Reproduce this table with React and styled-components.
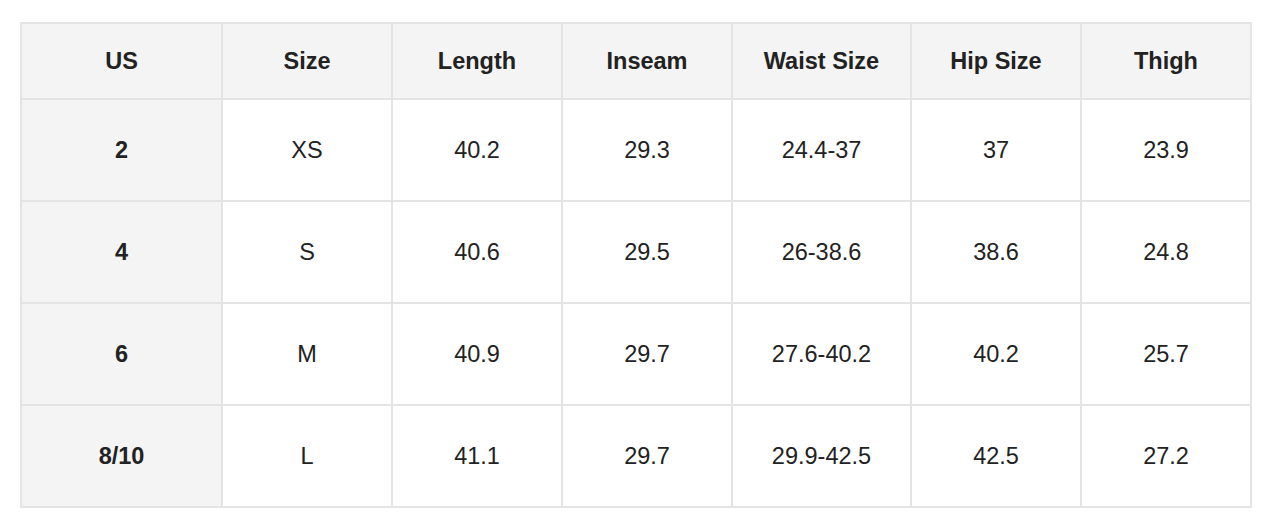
import styled, { createGlobalStyle } from "styled-components";

const columns = [
  { key: "us", label: "US", width: 201 },
  { key: "size", label: "Size", width: 170 },
  { key: "length", label: "Length", width: 170 },
  { key: "inseam", label: "Inseam", width: 170 },
  { key: "waist", label: "Waist Size", width: 179 },
  { key: "hip", label: "Hip Size", width: 170 },
  { key: "thigh", label: "Thigh", width: 170 },
];

const rows = [
  { us: "2", size: "XS", length: "40.2", inseam: "29.3", waist: "24.4-37", hip: "37", thigh: "23.9" },
  { us: "4", size: "S", length: "40.6", inseam: "29.5", waist: "26-38.6", hip: "38.6", thigh: "24.8" },
  { us: "6", size: "M", length: "40.9", inseam: "29.7", waist: "27.6-40.2", hip: "40.2", thigh: "25.7" },
  { us: "8/10", size: "L", length: "41.1", inseam: "29.7", waist: "29.9-42.5", hip: "42.5", thigh: "27.2" },
];

const GlobalStyle = createGlobalStyle`
  body {
    margin: 0;
    background: #fff;
    font-family: "Liberation Sans", Arial, Helvetica, sans-serif;
    color: #222;
  }
`;

const Page = styled.div`
  padding: 22px 20px;
`;

const Table = styled.table`
  width: 1232px;
  border-collapse: collapse;
  table-layout: fixed;
  border: 2px solid #e4e4e4;
`;

const HeadRow = styled.tr`
  height: 76px;
  background: #f4f4f4;
`;

const BodyRow = styled.tr`
  height: 102px;
`;

const Th = styled.th`
  border: 2px solid #e4e4e4;
  padding: 0;
  text-align: center;
  font-size: 23.5px;
  font-weight: 700;
  color: #222;
`;

const Td = styled.td`
  border: 2px solid #e4e4e4;
  padding: 0;
  text-align: center;
  font-size: 23.5px;
  color: #222;
  font-weight: ${(p) => (p.$lead ? 700 : 400)};
  background: ${(p) => (p.$lead ? "#f4f4f4" : "#fff")};
`;

export default function App() {
  return (
    <Page>
      <GlobalStyle />
      <Table>
        <colgroup>
          {columns.map((c) => (
            <col key={c.key} style={{ width: c.width }} />
          ))}
        </colgroup>
        <thead>
          <HeadRow>
            {columns.map((c) => (
              <Th key={c.key}>{c.label}</Th>
            ))}
          </HeadRow>
        </thead>
        <tbody>
          {rows.map((r) => (
            <BodyRow key={r.us}>
              {columns.map((c, i) => (
                <Td key={c.key} $lead={i === 0}>
                  {r[c.key]}
                </Td>
              ))}
            </BodyRow>
          ))}
        </tbody>
      </Table>
    </Page>
  );
}
